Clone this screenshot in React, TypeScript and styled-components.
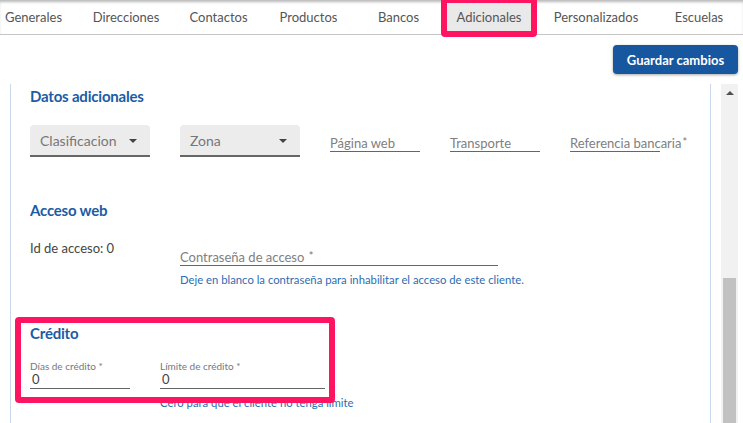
import React from "react";
import styled, { createGlobalStyle } from "styled-components";

const GlobalStyle = createGlobalStyle`
  html, body { margin: 0; padding: 0; background: #fff; }
  body { font-family: Lato, "Noto Sans", "Liberation Sans", sans-serif; }
  * { box-sizing: border-box; }
`;

const Page = styled.div`
  position: relative;
  height: 423px;
  display: flex;
  flex-direction: column;
  overflow: hidden;
`;

const TabBar = styled.nav`
  height: 35px;
  flex-shrink: 0;
  display: flex;
  border-bottom: 1px solid #c4c4c4;
  box-shadow: inset 0 3px 3px -1px rgba(0, 0, 0, 0.28);
  overflow: hidden;
`;

const Tab = styled.div<{ $w: number }>`
  flex: 0 0 ${(p) => p.$w}px;
  display: flex;
  align-items: center;
  justify-content: center;
  font-size: 13px;
  color: #555;
  white-space: nowrap;
`;

const TabLabel = styled.span<{ $active?: boolean }>`
  display: inline-flex;
  align-items: center;
  justify-content: center;
  height: 29px;
  min-width: ${(p) => (p.$active ? "84px" : "0")};
  background: ${(p) => (p.$active ? "#e9e9e9" : "transparent")};
`;

const Toolbar = styled.div`
  display: flex;
  justify-content: flex-end;
  padding: 10px 5px 10px 0;
  flex-shrink: 0;
`;

const SaveButton = styled.button`
  width: 125px;
  height: 29px;
  border: none;
  border-radius: 4px;
  background: #1657a0;
  color: #fff;
  font-family: inherit;
  font-weight: 700;
  font-size: 13px;
  box-shadow: 0 1px 3px rgba(0, 0, 0, 0.35);
`;

const Body = styled.div`
  flex: 1;
  min-height: 0;
  display: flex;
  padding: 0 5px 0 10px;
  gap: 10px;
`;

const Panel = styled.div`
  flex: 1;
  border-left: 1px solid #c9d8ea;
  border-right: 1px solid #c9d8ea;
  padding: 2px 0 0 19px;
  overflow: hidden;
`;

const SectionTitle = styled.h2<{ $mt?: number }>`
  margin: ${(p) => p.$mt ?? 0}px 0 0;
  font-size: 15px;
  line-height: 20px;
  font-weight: 700;
  color: #1b5ca5;
  letter-spacing: -0.2px;
`;

const FieldsRow = styled.div<{ $mt: number; $gap?: number }>`
  display: flex;
  align-items: flex-start;
  gap: ${(p) => p.$gap ?? 30}px;
  margin-top: ${(p) => p.$mt}px;
`;

const SelectBox = styled.div`
  width: 120px;
  height: 32px;
  display: flex;
  align-items: center;
  justify-content: space-between;
  padding: 0 13px 0 10px;
  background: #ececec;
  border-radius: 4px 4px 0 0;
  border-bottom: 2px solid #666;
  font-size: 14px;
  color: #777;
`;

const Caret = styled.span`
  width: 0;
  height: 0;
  border-left: 4px solid transparent;
  border-right: 4px solid transparent;
  border-top: 4px solid #444;
  margin-top: 2px;
`;

const LineField = styled.div<{ $w: number; $mt?: number }>`
  width: ${(p) => p.$w}px;
  height: 17px;
  margin-top: ${(p) => p.$mt ?? 0}px;
  font-size: 13px;
  line-height: 16px;
  color: #808080;
  border-bottom: 1px solid #666;
  white-space: nowrap;
`;

const Asterisk = styled.span`
  font-size: 11px;
  line-height: 0;
  vertical-align: 2px;
  margin-left: 1px;
  color: #777;
`;

const PlainText = styled.div<{ $w: number }>`
  width: ${(p) => p.$w}px;
  font-size: 13px;
  line-height: 16px;
  color: #444;
`;

const Column = styled.div`
  display: flex;
  flex-direction: column;
`;

const Hint = styled.div`
  margin-top: 7px;
  font-size: 11.3px;
  line-height: 14px;
  color: #2d6cb2;
  white-space: nowrap;
`;

const SmallLabel = styled.div`
  font-size: 10px;
  line-height: 12px;
  color: #777;
  white-space: nowrap;
`;

const ValueInput = styled.div<{ $w: number }>`
  width: ${(p) => p.$w}px;
  font-size: 13px;
  line-height: 14px;
  padding: 0 2px 2px;
  color: #444;
  border-bottom: 1px solid #666;
`;

const ScrollTrack = styled.div`
  width: 17px;
  flex-shrink: 0;
  background: #f1f1f1;
  display: flex;
  flex-direction: column;
  align-items: center;
`;

const ScrollArrow = styled.div`
  height: 17px;
  width: 17px;
  display: flex;
  align-items: center;
  justify-content: center;
  &::before {
    content: "";
    border-left: 4px solid transparent;
    border-right: 4px solid transparent;
    border-bottom: 4px solid #505050;
  }
`;

const ScrollThumb = styled.div`
  width: 13px;
  flex: 1;
  margin-top: 177px;
  background: #c1c1c1;
`;

const Highlight = styled.div<{ $x: number; $y: number; $w: number; $h: number }>`
  position: absolute;
  left: ${(p) => p.$x}px;
  top: ${(p) => p.$y}px;
  width: ${(p) => p.$w}px;
  height: ${(p) => p.$h}px;
  border: 6px solid #fe1461;
  border-radius: 4px;
  pointer-events: none;
`;

const tabs: { label: string; w: number; active?: boolean }[] = [
  { label: "Generales", w: 67 },
  { label: "Direcciones", w: 118 },
  { label: "Contactos", w: 67 },
  { label: "Productos", w: 113 },
  { label: "Bancos", w: 67 },
  { label: "Adicionales", w: 114, active: true },
  { label: "Personalizados", w: 100 },
  { label: "Escuelas", w: 106 },
];

export default function App() {
  return (
    <>
      <GlobalStyle />
      <Page>
        <TabBar>
          {tabs.map((t) => (
            <Tab key={t.label} $w={t.w}>
              <TabLabel $active={t.active}>{t.label}</TabLabel>
            </Tab>
          ))}
        </TabBar>
        <Toolbar>
          <SaveButton>Guardar cambios</SaveButton>
        </Toolbar>
        <Body>
          <Panel>
            <SectionTitle>Datos adicionales</SectionTitle>
            <FieldsRow $mt={19}>
              <SelectBox>
                Clasificacion
                <Caret />
              </SelectBox>
              <SelectBox>
                Zona
                <Caret />
              </SelectBox>
              <LineField $w={90} $mt={10}>Página web</LineField>
              <LineField $w={90} $mt={10}>Transporte</LineField>
              <LineField $w={90} $mt={10}>
                Referencia bancaria<Asterisk>*</Asterisk>
              </LineField>
            </FieldsRow>

            <SectionTitle $mt={43}>Acceso web</SectionTitle>
            <FieldsRow $mt={20} $gap={0}>
              <PlainText $w={150}>Id de acceso: 0</PlainText>
              <Column>
                <LineField $w={318} $mt={9}>
                  Contraseña de acceso <Asterisk>*</Asterisk>
                </LineField>
                <Hint>Deje en blanco la contraseña para inhabilitar el acceso de este cliente.</Hint>
              </Column>
            </FieldsRow>

            <SectionTitle $mt={36}>Crédito</SectionTitle>
            <FieldsRow $mt={17}>
              <Column>
                <SmallLabel>Días de crédito *</SmallLabel>
                <ValueInput $w={100}>0</ValueInput>
              </Column>
              <Column>
                <SmallLabel>Límite de crédito *</SmallLabel>
                <ValueInput $w={165}>0</ValueInput>
                <Hint>Cero para que el cliente no tenga límite</Hint>
              </Column>
            </FieldsRow>
          </Panel>
          <ScrollTrack>
            <ScrollArrow />
            <ScrollThumb />
          </ScrollTrack>
        </Body>
        <Highlight $x={441} $y={-3} $w={96} $h={40} />
        <Highlight $x={15} $y={317} $w={320} $h={86} />
      </Page>
    </>
  );
}
